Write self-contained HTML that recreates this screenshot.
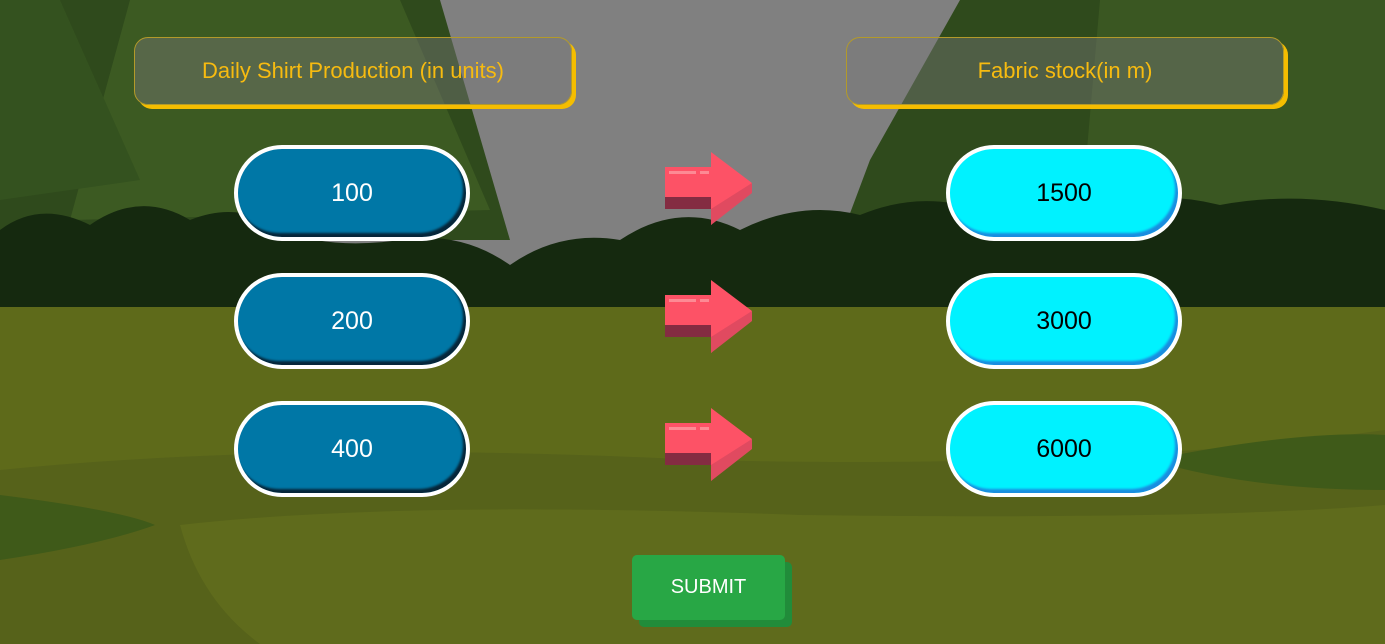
<!DOCTYPE html>
<html><head><meta charset="utf-8"><style>
*{margin:0;padding:0;box-sizing:border-box}
body{width:1385px;height:644px;overflow:hidden;position:relative;font-family:"Liberation Sans",sans-serif;background:#808080}
.abs{position:absolute}
.hdr{position:absolute;top:37px;width:438px;height:68px;border:1px solid #b39a2a;border-radius:14px;background:rgba(120,120,120,.45);box-shadow:4px 4px 0 #f5bd00;color:#f7bb10;font-size:22px;display:flex;align-items:center;justify-content:center}
.pill{position:absolute;width:236px;height:96px;border:4px solid #fff;border-radius:48px;display:flex;align-items:center;justify-content:center;font-size:25px}
.b{background:#0077a6;color:#fff;box-shadow:inset -3px -4px 2px #06263a}
.c{background:#00f2ff;color:#000;box-shadow:inset -3px -4px 2px #1a8de0}
.sub{position:absolute;left:632px;top:555px;width:153px;height:65px;background:#28a745;border-radius:5px;box-shadow:7px 7px 0 #218c3a;color:#fff;font-size:20px;display:flex;align-items:center;justify-content:center}
</style></head><body>
<svg class="abs" style="left:0;top:0" width="1385" height="644">
<rect width="1385" height="644" fill="#808080"/>
<polygon points="0,0 440,0 510,240 0,240" fill="#2f4a1c"/>
<polygon points="130,0 400,0 490,210 70,220" fill="#3c5a22"/>
<polygon points="0,0 60,0 140,180 0,200" fill="#34521f"/>
<polygon points="960,0 1385,0 1385,240 840,240 870,160" fill="#2f4a1c"/>
<polygon points="1100,0 1385,0 1385,220 1080,230" fill="#3a5722"/>
<path d="M0,230 Q40,200 90,225 Q140,190 190,220 Q240,200 280,230 Q330,250 400,240 Q460,230 510,265 Q560,230 620,240 Q680,200 740,230 Q800,200 860,215 Q920,190 980,210 Q1040,190 1100,205 Q1160,190 1220,205 Q1300,190 1385,210 L1385,310 L0,310Z" fill="#15290f"/>
<rect y="307" width="1385" height="337" fill="#5e6a1a"/>
<path d="M0,470 Q300,440 700,460 Q1100,470 1385,430 L1385,644 L0,644Z" fill="#56621a"/>
<path d="M1150,460 Q1300,430 1385,435 L1385,490 Q1250,490 1150,460Z" fill="#3f5a19"/>
<path d="M0,495 Q120,510 155,525 Q100,545 0,560Z" fill="#3f5a19"/>
<path d="M180,525 Q400,500 800,515 Q1200,520 1385,505 L1385,644 L260,644 Q200,600 180,525Z" fill="#5f6b1c"/>
<g id="ar">
<polygon points="665,167 711,167 711,152 752,183 711,225 711,209 665,209" fill="#fd5266"/>
<polygon points="665,197 711,197 711,209 665,209" fill="#842c42"/>
<polygon points="711,209 752,183 752,193 711,225" fill="#e04a60"/>
<rect x="669" y="171" width="27" height="3" fill="#fd8a94"/><rect x="700" y="171" width="9" height="3" fill="#fd8a94"/>
</g>
<use href="#ar" y="128"/>
<use href="#ar" y="256"/>
</svg>
<div class="hdr" style="left:134px">Daily Shirt Production (in units)</div>
<div class="hdr" style="left:846px">Fabric stock(in m)</div>
<div class="pill b" style="left:234px;top:145px">100</div>
<div class="pill b" style="left:234px;top:273px">200</div>
<div class="pill b" style="left:234px;top:401px">400</div>
<div class="pill c" style="left:946px;top:145px">1500</div>
<div class="pill c" style="left:946px;top:273px">3000</div>
<div class="pill c" style="left:946px;top:401px">6000</div>
<div class="sub">SUBMIT</div>
</body></html>
